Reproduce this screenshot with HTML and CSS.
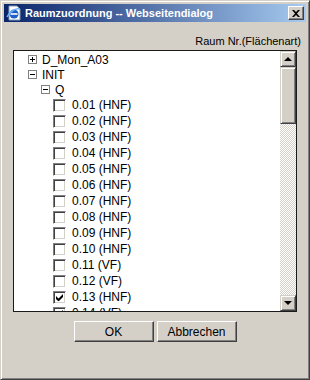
FILE: index.html
```html
<!DOCTYPE html>
<html lang="de">
<head>
    <meta charset="UTF-8">
    <title>Raumzuordnung -- Webseitendialog</title>
    <link rel="stylesheet" href="styles.css">
</head>
<body>
    <div class="window">
        <div class="titlebar">
            <svg class="app-icon" width="16" height="16" viewBox="0 0 16 16">
                <path d="M3 1h8l3 3v11H3z" fill="#fff" stroke="#7f9db9"/>
                <circle cx="8" cy="9" r="4.5" fill="#1f5fc8"/>
                <rect x="4.5" y="8.2" width="7" height="1.6" fill="#fff"/>
                <path d="M1 12c3-6 9-9 13-8" fill="none" stroke="#6fb3ff" stroke-width="1.5"/>
            </svg>
            <span class="title">Raumzuordnung -- Webseitendialog</span>
            <div class="close-btn">
                <svg width="8" height="7" viewBox="0 0 8 7">
                    <path d="M0 0h2l2 2 2-2h2L5 3.5 8 7H6L4 5 2 7H0l3-3.5z" fill="#000"/>
                </svg>
            </div>
        </div>

        <div class="content">
            <div class="col-head">Raum Nr.(Flächenart)</div>

            <div class="treebox">
                <div class="tree">
                    <div class="row node lvl0"><span class="expander plus"></span><span class="label">D_Mon_A03</span></div>
                    <div class="row node lvl0"><span class="expander minus"></span><span class="label">INIT</span></div>
                    <div class="row node lvl1"><span class="expander minus"></span><span class="label">Q</span></div>
                    <div class="row leaf"><span class="check"></span><span class="label">0.01 (HNF)</span></div>
                    <div class="row leaf"><span class="check"></span><span class="label">0.02 (HNF)</span></div>
                    <div class="row leaf"><span class="check"></span><span class="label">0.03 (HNF)</span></div>
                    <div class="row leaf"><span class="check"></span><span class="label">0.04 (HNF)</span></div>
                    <div class="row leaf"><span class="check"></span><span class="label">0.05 (HNF)</span></div>
                    <div class="row leaf"><span class="check"></span><span class="label">0.06 (HNF)</span></div>
                    <div class="row leaf"><span class="check"></span><span class="label">0.07 (HNF)</span></div>
                    <div class="row leaf"><span class="check"></span><span class="label">0.08 (HNF)</span></div>
                    <div class="row leaf"><span class="check"></span><span class="label">0.09 (HNF)</span></div>
                    <div class="row leaf"><span class="check"></span><span class="label">0.10 (HNF)</span></div>
                    <div class="row leaf"><span class="check"></span><span class="label">0.11 (VF)</span></div>
                    <div class="row leaf"><span class="check"></span><span class="label">0.12 (VF)</span></div>
                    <div class="row leaf">
                        <span class="check">
                            <svg width="7" height="7" viewBox="0 0 7 7"><path d="M0 2v3l2 2h1l4-4V0L2.5 4.5z" fill="#000"/></svg>
                        </span>
                        <span class="label">0.13 (HNF)</span>
                    </div>
                    <div class="row leaf">
                        <span class="check">
                            <svg width="7" height="7" viewBox="0 0 7 7"><path d="M0 2v3l2 2h1l4-4V0L2.5 4.5z" fill="#000"/></svg>
                        </span>
                        <span class="label">0.14 (VF)</span>
                    </div>
                </div>

                <div class="scrollbar">
                    <div class="sb-btn"><span class="arrow up"></span></div>
                    <div class="sb-thumb"></div>
                    <div class="sb-track"></div>
                    <div class="sb-btn"><span class="arrow down"></span></div>
                </div>
            </div>

            <div class="buttons">
                <button class="button">OK</button>
                <button class="button">Abbrechen</button>
            </div>
        </div>
    </div>
</body>
</html>
```

FILE: styles.css
```css
:root {
    --face: #d4d0c8;
    --light: #ffffff;
    --shadow: #808080;
    --dark: #404040;
}

* {
    box-sizing: border-box;
}

body {
    margin: 0;
    background: var(--face);
    font-family: "Liberation Sans", Arial, sans-serif;
    font-size: 12px;
    color: #000;
}

.window {
    width: 310px;
    height: 380px;
    border: 1px solid;
    border-color: var(--face) var(--dark) var(--dark) var(--face);
    box-shadow: inset 1px 1px var(--light), inset -1px -1px var(--shadow);
    padding: 3px;
    display: flex;
    flex-direction: column;
}

/* title bar */
.titlebar {
    height: 18px;
    display: flex;
    align-items: center;
    padding: 0 2px 0 2px;
    background: linear-gradient(90deg, #0a246a, #a6caf0);
}

.app-icon {
    flex: none;
}

.title {
    flex: 1;
    margin-left: 3px;
    color: #fff;
    font-weight: bold;
    font-size: 11px;
    white-space: nowrap;
}

.close-btn {
    width: 16px;
    height: 14px;
    background: var(--face);
    border: 1px solid;
    border-color: var(--light) var(--dark) var(--dark) var(--light);
    box-shadow: inset -1px -1px var(--shadow);
    display: flex;
    align-items: center;
    justify-content: center;
}

/* body */
.content {
    flex: 1;
    display: flex;
    flex-direction: column;
    padding: 0 9px;
}

.col-head {
    text-align: right;
    font-size: 11px;
    margin: 12px -4px 0 0;
    height: 15px;
    line-height: 15px;
}

.treebox {
    margin-top: 1px;
    height: 262px;
    border: 1px solid #1a1a1a;
    background: #fff;
    display: flex;
    overflow: hidden;
}

.tree {
    flex: 1;
    padding-top: 1px;
    overflow: hidden;
}

.row {
    display: flex;
    align-items: center;
    white-space: nowrap;
}

.node {
    height: 15px;
}

.leaf {
    height: 16px;
    padding-left: 39px;
}

.lvl0 {
    padding-left: 14px;
}

.lvl1 {
    padding-left: 27px;
}

.expander {
    width: 9px;
    height: 9px;
    border: 1px solid var(--shadow);
    background: #fff;
    position: relative;
    margin-right: 5px;
    flex: none;
}

.expander::before,
.plus::after {
    content: '';
    position: absolute;
    background: #000;
}

.expander::before {
    left: 1px;
    top: 3px;
    width: 5px;
    height: 1px;
}

.plus::after {
    left: 3px;
    top: 1px;
    width: 1px;
    height: 5px;
}

.check {
    width: 13px;
    height: 13px;
    flex: none;
    background: #fff;
    border: 1px solid;
    border-color: var(--shadow) var(--light) var(--light) var(--shadow);
    box-shadow: inset 1px 1px var(--dark), inset -1px -1px var(--face);
    margin-right: 6px;
    display: flex;
    align-items: center;
    justify-content: center;
}

/* scrollbar */
.scrollbar {
    width: 16px;
    flex: none;
    display: flex;
    flex-direction: column;
}

.sb-btn,
.sb-thumb {
    background: var(--face);
    border: 1px solid;
    border-color: var(--face) var(--dark) var(--dark) var(--face);
    box-shadow: inset 1px 1px var(--light), inset -1px -1px var(--shadow);
}

.sb-btn {
    height: 16px;
    display: flex;
    align-items: center;
    justify-content: center;
}

.sb-thumb {
    height: 57px;
}

.sb-track {
    flex: 1;
    background: repeating-conic-gradient(var(--face) 0 25%, #fff 0 50%) 0 0 / 2px 2px;
}

.arrow {
    width: 0;
    height: 0;
    border-left: 4px solid transparent;
    border-right: 4px solid transparent;
}

.arrow.up {
    border-bottom: 4px solid #000;
}

.arrow.down {
    border-top: 4px solid #000;
}

/* buttons */
.buttons {
    display: flex;
    justify-content: center;
    gap: 3px;
    margin-top: 9px;
}

.button {
    width: 80px;
    height: 21px;
    padding: 0;
    background: var(--face);
    font-family: "Liberation Sans", Arial, sans-serif;
    font-size: 12px;
    color: #000;
    border: 1px solid;
    border-color: var(--light) var(--dark) var(--dark) var(--light);
    box-shadow: inset -1px -1px var(--shadow);
}
```
